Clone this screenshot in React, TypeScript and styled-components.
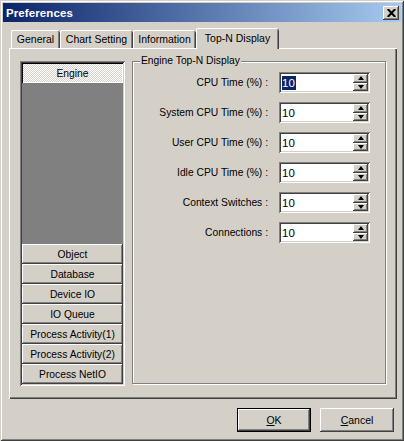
import React from "react";
import styled, { createGlobalStyle } from "styled-components";

const FACE = "#d4d0c8";
const SHADOW = "#808080";
const DARK = "#404040";

const GlobalStyle = createGlobalStyle`
  html, body {
    margin: 0;
    padding: 0;
    background: ${FACE};
  }
  body {
    font-family: "Liberation Sans", Arial, sans-serif;
    font-size: 10px;
    color: #000;
  }
  * {
    box-sizing: border-box;
  }
`;

const raised = `
  box-shadow: inset -1px -1px 0 ${DARK}, inset 1px 1px 0 #fff,
    inset -2px -2px 0 ${SHADOW};
`;

const sunken = `
  box-shadow: inset 1px 1px 0 ${SHADOW}, inset -1px -1px 0 #fff,
    inset 2px 2px 0 ${DARK}, inset -2px -2px 0 ${FACE};
`;

const Window = styled.div`
  width: 404px;
  height: 441px;
  padding: 3px;
  background: ${FACE};
  display: flex;
  flex-direction: column;
  box-shadow: inset 1px 1px 0 ${FACE}, inset -1px -1px 0 ${DARK},
    inset 2px 2px 0 #fff, inset -2px -2px 0 ${SHADOW};
`;

const TitleBar = styled.div`
  height: 19px;
  display: flex;
  align-items: center;
  justify-content: space-between;
  padding: 0 2px 0 3px;
  background: linear-gradient(to right, #0a246a, #a6caf0);
`;

const TitleText = styled.span`
  color: #fff;
  font-weight: bold;
  font-size: 11.5px;
  letter-spacing: 0.1px;
`;

const CloseButton = styled.div`
  width: 16px;
  height: 14px;
  background: ${FACE};
  display: flex;
  align-items: center;
  justify-content: center;
  ${raised}
`;

const TabStrip = styled.div`
  display: flex;
  align-items: flex-end;
  height: 20px;
  margin: 6px 0 0 8px;
`;

const Tab = styled.div<{ $width: number; $active?: boolean }>`
  width: ${(p) => p.$width}px;
  height: ${(p) => (p.$active ? 21 : 18)}px;
  margin-bottom: ${(p) => (p.$active ? -1 : 0)}px;
  position: relative;
  z-index: ${(p) => (p.$active ? 2 : 0)};
  display: flex;
  align-items: center;
  justify-content: center;
  padding-bottom: ${(p) => (p.$active ? 2 : 0)}px;
  background: ${FACE};
  border-radius: 2px 2px 0 0;
  font-size: 10.5px;
  white-space: nowrap;
  box-shadow: inset 1px 0 0 #fff, inset 0 1px 0 #fff, inset -1px 0 0 ${DARK},
    inset -2px 0 0 ${SHADOW};
`;

const Panel = styled.div`
  margin-left: 6px;
  width: 388px;
  height: 351px;
  display: flex;
  align-items: flex-start;
  gap: 7px;
  padding: 13px 0 0 11px;
  box-shadow: inset 1px 1px 0 #fff, inset -1px -1px 0 ${DARK},
    inset -2px -2px 0 ${SHADOW};
`;

const CategoryList = styled.div`
  width: 105px;
  height: 325px;
  padding: 2px;
  background: ${SHADOW};
  display: flex;
  flex-direction: column;
  ${sunken}
`;

const CategoryButton = styled.div<{ $checked?: boolean }>`
  height: 20px;
  flex-shrink: 0;
  display: flex;
  align-items: center;
  justify-content: center;
  white-space: nowrap;
  font-size: 10.3px;
  background: ${(p) =>
    p.$checked
      ? `repeating-conic-gradient(#fff 0 25%, ${FACE} 0 50%) 0 0 / 2px 2px`
      : FACE};
  box-shadow: ${(p) =>
    p.$checked
      ? `inset 1px 1px 0 #000, inset -1px -1px 0 #fff`
      : `inset -1px -1px 0 ${DARK}, inset 1px 1px 0 #fff, inset -2px -2px 0 ${SHADOW}`};
`;

const ListFiller = styled.div`
  flex: 1;
`;

const GroupBox = styled.div`
  position: relative;
  width: 254px;
  height: 323px;
  border: 1px solid ${SHADOW};
  box-shadow: inset 1px 1px 0 #fff, 1px 1px 0 #fff;
  padding-top: 10px;
`;

const GroupLabel = styled.span`
  position: absolute;
  top: -7px;
  left: 7px;
  padding: 0 1px;
  line-height: 12px;
  font-size: 10.3px;
  background: ${FACE};
  white-space: nowrap;
`;

const FieldGrid = styled.div`
  display: grid;
  grid-template-columns: 135px 91px;
  column-gap: 11px;
  row-gap: 9px;
`;

const FieldLabel = styled.label`
  text-align: right;
  line-height: 21px;
  font-size: 10.3px;
  white-space: nowrap;
`;

const SpinBox = styled.div`
  width: 91px;
  height: 21px;
  padding: 2px;
  display: flex;
  background: #fff;
  ${sunken}
`;

const SpinValue = styled.div`
  flex: 1;
  display: flex;
  align-items: center;
  padding-left: 1px;
  font-size: 11.5px;
`;

const Selected = styled.span`
  background: #0a246a;
  color: #fff;
  line-height: 14px;
  padding-right: 1px;
`;

const SpinButtons = styled.div`
  width: 15px;
  display: flex;
  flex-direction: column;
`;

const SpinButton = styled.div`
  flex: 1;
  display: flex;
  align-items: center;
  justify-content: center;
  background: ${FACE};
  ${raised}
`;

const Arrow = styled.span<{ $down?: boolean }>`
  width: 0;
  height: 0;
  border-left: 3.5px solid transparent;
  border-right: 3.5px solid transparent;
  ${(p) =>
    p.$down ? `border-top: 4px solid #000;` : `border-bottom: 4px solid #000;`}
`;

const Footer = styled.div`
  display: flex;
  justify-content: flex-end;
  gap: 9px;
  margin-top: 9px;
  padding-right: 7px;
`;

const DialogButton = styled.div<{ $default?: boolean }>`
  width: 74px;
  height: 24px;
  display: flex;
  align-items: center;
  justify-content: center;
  font-size: 10.5px;
  background: ${FACE};
  border: ${(p) => (p.$default ? "1px solid #000" : "none")};
  ${raised}
`;

const tabs = [
  { label: "General", width: 49 },
  { label: "Chart Setting", width: 73 },
  { label: "Information", width: 63 },
  { label: "Top-N Display", width: 83, active: true },
];

const categories = [
  "Object",
  "Database",
  "Device IO",
  "IO Queue",
  "Process Activity(1)",
  "Process Activity(2)",
  "Process NetIO",
];

const fields = [
  "CPU Time (%) :",
  "System CPU Time (%) :",
  "User CPU Time (%) :",
  "Idle CPU Time (%) :",
  "Context Switches :",
  "Connections :",
];

function Spinner({ value, focused }: { value: string; focused?: boolean }) {
  return (
    <SpinBox>
      <SpinValue>{focused ? <Selected>{value}</Selected> : value}</SpinValue>
      <SpinButtons>
        <SpinButton>
          <Arrow />
        </SpinButton>
        <SpinButton>
          <Arrow $down />
        </SpinButton>
      </SpinButtons>
    </SpinBox>
  );
}

export default function App() {
  return (
    <>
      <GlobalStyle />
      <Window>
        <TitleBar>
          <TitleText>Preferences</TitleText>
          <CloseButton>
            <svg width="9" height="8" viewBox="0 0 9 8">
              <path d="M0.7 0 L8.3 8 M8.3 0 L0.7 8" stroke="#000" strokeWidth="2.1" />
            </svg>
          </CloseButton>
        </TitleBar>

        <TabStrip>
          {tabs.map((t) => (
            <Tab key={t.label} $width={t.width} $active={t.active}>
              {t.label}
            </Tab>
          ))}
        </TabStrip>

        <Panel>
          <CategoryList>
            <CategoryButton $checked>Engine</CategoryButton>
            <ListFiller />
            {categories.map((c) => (
              <CategoryButton key={c}>{c}</CategoryButton>
            ))}
          </CategoryList>

          <GroupBox>
            <GroupLabel>Engine Top-N Display</GroupLabel>
            <FieldGrid>
              {fields.map((f, i) => (
                <React.Fragment key={f}>
                  <FieldLabel>{f}</FieldLabel>
                  <Spinner value="10" focused={i === 0} />
                </React.Fragment>
              ))}
            </FieldGrid>
          </GroupBox>
        </Panel>

        <Footer>
          <DialogButton $default>
            <span>
              <u>O</u>K
            </span>
          </DialogButton>
          <DialogButton>
            <span>
              <u>C</u>ancel
            </span>
          </DialogButton>
        </Footer>
      </Window>
    </>
  );
}
